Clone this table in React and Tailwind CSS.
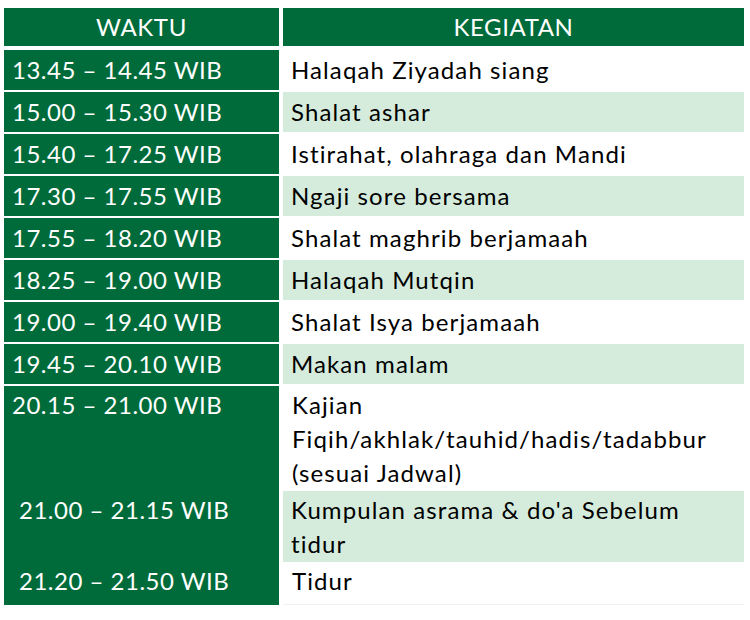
import React from 'react';

const rows = [
  { time: '13.45 – 14.45 WIB', act: 'Halaqah Ziyadah siang' },
  { time: '15.00 – 15.30 WIB', act: 'Shalat ashar' },
  { time: '15.40 – 17.25 WIB', act: 'Istirahat, olahraga dan Mandi' },
  { time: '17.30 – 17.55 WIB', act: 'Ngaji sore bersama' },
  { time: '17.55 – 18.20 WIB', act: 'Shalat maghrib berjamaah' },
  { time: '18.25 – 19.00 WIB', act: 'Halaqah Mutqin' },
  { time: '19.00 – 19.40 WIB', act: 'Shalat Isya berjamaah' },
  { time: '19.45 – 20.10 WIB', act: 'Makan malam' },
];

const App = () => {
  return (
    <div
      className="w-[750px] h-[620px] bg-white pt-[8px] pl-[4px]"
      style={{ fontFamily: 'Lato, "Noto Sans", sans-serif' }}
    >
      <div className="w-[740px] flex flex-col text-[24px]">
        {/* header */}
        <div className="flex gap-[4px] h-[38px] tracking-[0.6px]">
          <div className="w-[275px] bg-[#006b3a] text-white flex items-center justify-center">
            WAKTU
          </div>
          <div className="flex-1 bg-[#006b3a] text-white flex items-center justify-center">
            KEGIATAN
          </div>
        </div>

        <div className="flex flex-col gap-[2px] mt-[4px]">
          {rows.map((r, i) => (
            <div key={i} className="flex gap-[4px] h-[40px]">
              <div className="w-[275px] bg-[#006b3a] text-white flex items-center pl-[8px] tracking-[0.5px]">
                {r.time}
              </div>
              <div
                className={`flex-1 flex items-center pl-[8px] text-black tracking-[1.1px] ${
                  i % 2 === 1 ? 'bg-[#d5ecdc]' : 'bg-white'
                }`}
              >
                {r.act}
              </div>
            </div>
          ))}
        </div>

        {/* last block: left column merged */}
        <div className="flex flex-col mt-[2px] leading-[34px]">
          <div className="flex gap-[4px] h-[105px]">
            <div className="w-[275px] bg-[#006b3a] text-white pl-[8px] pt-[2px] tracking-[0.5px]">
              20.15 – 21.00 WIB
            </div>
            <div className="flex-1 bg-white text-black pl-[9px] pt-[2px] tracking-[1.1px]">
              Kajian
              <br />
              Fiqih/akhlak/tauhid/hadis/tadabbur
              <br />
              (sesuai Jadwal)
            </div>
          </div>
          <div className="flex gap-[4px] h-[71px]">
            <div className="w-[275px] bg-[#006b3a] text-white pl-[15px] pt-[2px] tracking-[0.5px]">
              21.00 – 21.15 WIB
            </div>
            <div className="flex-1 bg-[#d5ecdc] text-black pl-[8px] pt-[2px] tracking-[1.1px]">
              Kumpulan asrama &amp; do'a Sebelum
              <br />
              tidur
            </div>
          </div>
          <div className="flex gap-[4px] h-[43px]">
            <div className="w-[275px] bg-[#006b3a] text-white pl-[15px] pt-[2px] tracking-[0.5px]">
              21.20 – 21.50 WIB
            </div>
            <div className="flex-1 bg-white text-black pl-[9px] pt-[2px] tracking-[1.1px] border-b border-[#eef3ef]">
              Tidur
            </div>
          </div>
        </div>
      </div>
    </div>
  );
};

export default App;
